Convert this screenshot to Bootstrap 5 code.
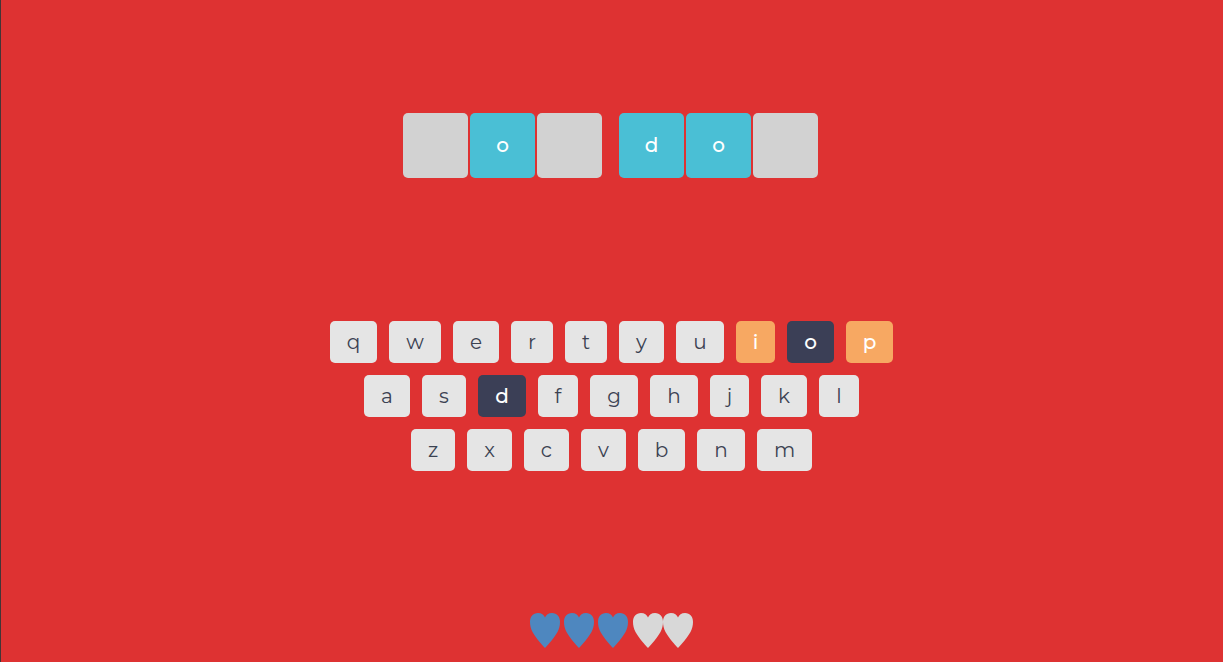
<!DOCTYPE html>
<html lang="en">
<head>
<meta charset="utf-8">
<meta name="viewport" content="width=device-width, initial-scale=1">
<title>Word game</title>
<link href="https://cdn.jsdelivr.net/npm/bootstrap@5.3.0/dist/css/bootstrap.min.css" rel="stylesheet">
<style>
body{background:#de3232;font-family:Montserrat,Inter,"Open Sans",sans-serif;font-size:20px}
.game{padding:113px 0 14px;box-shadow:inset 1px 0 #453536}
.board{height:66px}
.tile{width:65px;height:65px;margin-right:2px;padding-bottom:1px;border-radius:5px;background:#d2d2d2;color:#fff;font-weight:500}
.tile.shown{background:#4abfd5}
.word-space{width:15px}
.keys,.key-row{gap:12px}
.key{width:48px;height:42px;padding:0;border:0;border-radius:5px;background:#e5e5e5;color:#3b4252;font-size:20px;font-weight:400;line-height:30px}
.key:hover{background:#d8d8d8;color:#3b4252}
.key.k39{width:39px}.key.k40{width:40px}.key.k42{width:42px}.key.k44{width:44px}.key.k45{width:45px}
.key.k46{width:46px}.key.k47{width:47px}.key.k52{width:52px}.key.k55{width:55px}
.key.miss,.key.hit{color:#fff;font-weight:500;opacity:1}
.key.miss{background:#f7a862}
.key.hit{background:#3b3f56}
.lives{gap:4px}
.heart{width:30px;height:35px;fill:#4e87bf}
.lost{margin-left:1px}
.lost .heart{fill:#d8d8d8}
</style>
</head>
<body>
<main class="game min-vh-100 d-flex flex-column align-items-center justify-content-between">
  <section class="board d-flex" aria-label="Word">
    <div class="tile"></div>
    <div class="tile shown d-flex align-items-center justify-content-center">o</div>
    <div class="tile"></div>
    <div class="word-space"></div>
    <div class="tile shown d-flex align-items-center justify-content-center">d</div>
    <div class="tile shown d-flex align-items-center justify-content-center">o</div>
    <div class="tile"></div>
  </section>
  <section class="keys d-flex flex-column" aria-label="Keyboard">
    <div class="key-row d-flex justify-content-center">
      <button type="button" class="btn key k47">q</button>
      <button type="button" class="btn key k52">w</button>
      <button type="button" class="btn key k46">e</button>
      <button type="button" class="btn key k42">r</button>
      <button type="button" class="btn key k42">t</button>
      <button type="button" class="btn key k45">y</button>
      <button type="button" class="btn key">u</button>
      <button type="button" class="btn key k39 miss" disabled>i</button>
      <button type="button" class="btn key k47 hit" disabled>o</button>
      <button type="button" class="btn key k47 miss" disabled>p</button>
    </div>
    <div class="key-row d-flex justify-content-center">
      <button type="button" class="btn key k46">a</button>
      <button type="button" class="btn key k44">s</button>
      <button type="button" class="btn key hit" disabled>d</button>
      <button type="button" class="btn key k40">f</button>
      <button type="button" class="btn key">g</button>
      <button type="button" class="btn key">h</button>
      <button type="button" class="btn key k39">j</button>
      <button type="button" class="btn key k46">k</button>
      <button type="button" class="btn key k40">l</button>
    </div>
    <div class="key-row d-flex justify-content-center">
      <button type="button" class="btn key k44">z</button>
      <button type="button" class="btn key k45">x</button>
      <button type="button" class="btn key k45">c</button>
      <button type="button" class="btn key k45">v</button>
      <button type="button" class="btn key k47">b</button>
      <button type="button" class="btn key">n</button>
      <button type="button" class="btn key k55">m</button>
    </div>
  </section>
  <section class="lives d-flex" aria-label="Lives">
    <svg width="0" height="0" class="position-absolute" aria-hidden="true"><symbol id="heart" viewBox="0 0 30 35"><path d="M15 35C11.500 31.500 5.500 24.500 2.500 19C.8 15.500 0 12.500 0 9C0 3.500 3 0 8 0C11.500 0 14 1.800 15 4.500C16 1.800 18.500 0 22 0C27 0 30 3.500 30 9C30 12.500 29.200 15.500 27.500 19C24.500 24.500 18.500 31.500 15 35Z"/></symbol></svg>
    <svg class="heart" aria-hidden="true"><use href="#heart"/></svg>
    <svg class="heart" aria-hidden="true"><use href="#heart"/></svg>
    <svg class="heart" aria-hidden="true"><use href="#heart"/></svg>
    <div class="lost d-flex">
      <svg class="heart" aria-hidden="true"><use href="#heart"/></svg>
      <svg class="heart" aria-hidden="true"><use href="#heart"/></svg>
    </div>
  </section>
</main>
<script src="https://cdn.jsdelivr.net/npm/bootstrap@5.3.0/dist/js/bootstrap.bundle.min.js"></script>
</body>
</html>
